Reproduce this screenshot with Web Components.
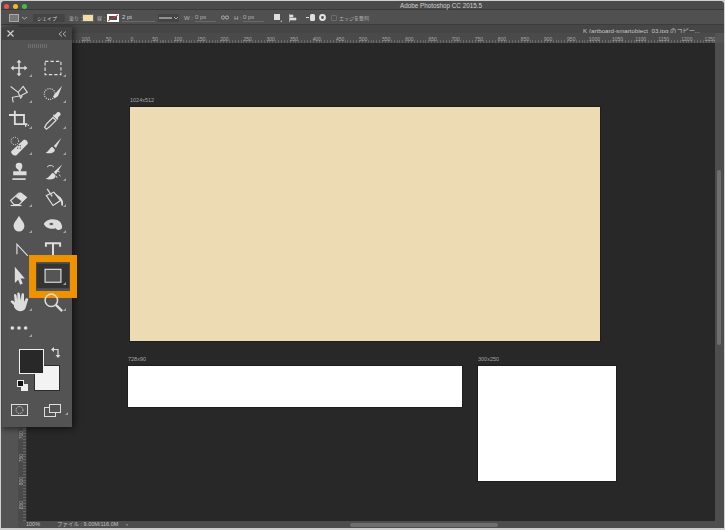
<!DOCTYPE html>
<html lang="ja">
<head>
<meta charset="utf-8">
<title>Photoshop</title>
<style>
  html, body { margin: 0; background: #cfcfcf; }
  body { width: 725px; height: 530px; overflow: hidden; font-family: "Liberation Sans", "Noto Sans CJK JP", sans-serif; }
</style>
</head>
<body>
<ps-window>
  <ps-titlebar slot="top">Adobe Photoshop CC 2015.5</ps-titlebar>
  <ps-options slot="top"></ps-options>
  <ps-tools slot="float"></ps-tools>
  <ps-document>
    <ps-artboard label="1024x512" style="left:103px;top:64px;width:470px;height:234px;background:#eddbb3"></ps-artboard>
    <ps-artboard label="728x90" style="left:101px;top:323px;width:334px;height:41px"></ps-artboard>
    <ps-artboard label="300x250" style="left:451px;top:323px;width:138px;height:115px"></ps-artboard>
  </ps-document>
</ps-window>

<script>
// window frame
customElements.define('ps-window', class extends HTMLElement {
  constructor() {
    super()
    this.attachShadow({ mode: 'open' }).innerHTML = `
      <style>
        :host { display: flex; flex-direction: column; position: relative; width: 723px; height: 527px; margin: 1px 1px 0 1px; background: #535353; border-radius: 4px 4px 0 0; overflow: hidden; }
        .float { position: absolute; left: 1px; top: 26px; }
        .doc { flex: 1; display: flex; min-height: 0; padding-left: 17px; }
      </style>
      <slot name="top"></slot>
      <div class="doc"><slot></slot></div>
      <div class="float"><slot name="float"></slot></div>`
  }
})

customElements.define('ps-titlebar', class extends HTMLElement {
  constructor() {
    super()
    this.attachShadow({ mode: 'open' }).innerHTML = `
      <style>
        :host { display: flex; align-items: center; height: 8px; padding: 0 3px; background: #4b4b4b; border-bottom: 1px solid #3a3a3a; color: #cfcfcf; font-size: 6.300px; position: relative; }
        .lights { display: flex; gap: 4px; margin-top: 2px; }
        .lights i { width: 5px; height: 5px; border-radius: 50%; }
        .name { position: absolute; left: 399px; top: 0; line-height: 10px; white-space: nowrap; }
      </style>
      <div class="lights">
        <i style="background:#f0544c"></i><i style="background:#f5b62f"></i><i style="background:#3bc148"></i>
      </div>
      <div class="name"><slot></slot></div>`
  }
})

// options bar along the top
customElements.define('ps-options', class extends HTMLElement {
  constructor() {
    super()
    this.attachShadow({ mode: 'open' }).innerHTML = `
      <style>
        :host { display: flex; align-items: center; box-sizing: content-box; height: 13px; padding-top: 1px; background: #505050; border-bottom: 1px solid #3c3c3c; color: #b4b4b4; font-size: 5px; white-space: nowrap; }
        span, svg { flex: none; display: block; }
        .field { border-bottom: 1px solid #6a6a6a; height: 8px; line-height: 8px; font-size: 6px; }
        .sel { background: #444; height: 8px; line-height: 8px; border-radius: 1px; color: #d0d0d0; }
      </style>
      <svg width="10" height="8" style="margin-left:8px"><rect x=".5" y=".5" width="9" height="7" fill="#777" stroke="#aaa"/></svg>
      <svg width="5" height="4" style="margin-left:3px"><path d="M0 1l2.500 2 2.500-2" fill="none" stroke="#aaa"/></svg>
      <span style="width:6px"></span>
      <span class="sel" style="width:32px;padding-left:4px;box-sizing:border-box">シェイプ</span>
      <span style="margin-left:4px;width:11px">塗り：</span>
      <span style="margin-left:2px;width:12px;height:8px;background:#f3dcaa;border:1px solid #666;box-sizing:border-box"></span>
      <span style="margin-left:3px;width:7px">線：</span>
      <svg width="12" height="8" style="margin-left:3px"><rect width="12" height="8" fill="#fff"/><rect x="2" y="2" width="8" height="4" fill="#505050"/><path d="M1 7L11 1" stroke="#d8343c"/></svg>
      <span class="field" style="margin-left:3px;width:33px;color:#d0d0d0">2 pt</span>
      <svg width="21" height="8" style="margin-left:3px"><rect width="21" height="8" fill="#444"/><path d="M1 4h13" stroke="#ddd"/><path d="M16 3l2 2 2-2" fill="none" stroke="#aaa"/></svg>
      <span style="margin-left:5px;width:10px;font-size:6px">W :</span>
      <span class="field" style="margin-left:1px;width:21px">0 px</span>
      <svg width="8" height="5" style="margin-left:5px"><circle cx="2" cy="2.500" r="1.600" fill="none" stroke="#aaa"/><circle cx="6" cy="2.500" r="1.600" fill="none" stroke="#aaa"/></svg>
      <span style="margin-left:5px;width:9px;font-size:6px">H :</span>
      <span class="field" style="width:21px">0 px</span>
      <svg width="10" height="10" style="margin-left:9px"><rect x="1" y="1" width="6" height="6" fill="#ddd"/><path d="M9 9h-2l2-2z" fill="#aaa"/></svg>
      <svg width="10" height="10" style="margin-left:5px"><path d="M1.500 1v8M2 2h3v2H2zM2 5h6v2H2z" fill="#ddd" stroke="#ddd" stroke-width=".6"/></svg>
      <svg width="12" height="10" style="margin-left:8px"><rect x="4" y="1" width="5" height="7" rx="1.500" fill="#ddd"/><path d="M0 4.500h3" stroke="#ddd"/></svg>
      <svg width="9" height="9" style="margin-left:0"><circle cx="4.500" cy="4.500" r="2.400" fill="none" stroke="#e6e6e6" stroke-width="2"/></svg>
      <span style="margin-left:4px;width:6px;height:6px;border:1px solid #6c6c6c;border-radius:1px;box-sizing:border-box"></span>
      <span style="margin-left:2px">エッジを整列</span>`
  }
})

const toolIcons = [
  // move
  '<path d="M12 4v16M4 12h16" stroke-width="1.800"/><path d="M12 2l3 3.500H9zM12 22l3-3.500H9zM2 12l3.500-3v6zM22 12l-3.500-3v6z" fill="#ddd" stroke="none"/>',
  // marquee
  '<rect x="2.500" y="4" width="19" height="16" stroke-dasharray="4 2.500" stroke-width="1.400"/>',
  // lasso
  '<path d="M2 3l9 7 6-7 5 7-8 4-10 2 1 6" stroke-width="1.300"/><path d="M11 10l3 7 2-3" stroke-width="1.300"/>',
  // quick selection
  '<circle cx="8" cy="12" r="6.500" stroke-dasharray="1.300 1.400" stroke-width="1.300"/><path d="M23 2l-8 9-3 4 2 2.500 4-3z" fill="#ddd" stroke="none"/>',
  // crop
  '<path d="M0 6h6M7 1v16h15M7 6h11v10" stroke-width="2.200"/><path d="M20 17v3M24 18.500h-1.500" stroke-width="1.600"/>',
  // eyedropper
  '<path d="M4 23l-2-2 2-4 8-8 3.500 3.500-8 8z" stroke-width="1.500"/><path d="M12 7l5 5 1.500-1.500-1-1 3.500-3.500c1-2-1.500-4.500-3.500-3.500l-3.500 3.500-1-1z" fill="#ddd" stroke="none"/>',
  // healing
  '<path d="M3 18l14-13c3-2 7 2 5 5L9 23c-2 2-8-2-6-5z" fill="#ddd" stroke="none"/><path d="M10 14l1 1M13 11l1 1M11 11l1 1M13 14l1 1" stroke="#555" stroke-width="1.300"/><circle cx="7" cy="6" r="4.500" stroke-dasharray="1.300 1.300" stroke-width="1.200"/>',
  // brush
  '<path d="M22 2l-9 10 2.500 2.500z" fill="#ddd" stroke="none"/><path d="M11 13c-3 1-4 6-8 7 5 2 12 0 11-4z" fill="#ddd" stroke="none"/>',
  // stamp
  '<path d="M8 5a4 4 0 0 1 8 0c0 3-2 4-2 6h7v5H5v-5h7c0-2-4-3-4-6z" fill="#ddd" stroke="none"/><path d="M4 20.500h16" stroke-width="2"/>',
  // history brush
  '<path d="M23 3l-10 9 2.500 3z" fill="#ddd" stroke="none"/><path d="M12 13c-3 1-4 6-9 7 5 2 13 1 12-4z" fill="#ddd" stroke="none"/><path d="M5 6c3-3 6-2 8 0M18 11l2 1M19 15l2 2M16 17l1 2" stroke-width="1.200"/>',
  // eraser
  '<path d="M2 15L12 6l8 6-8 8H6z" stroke-width="1.400"/><path d="M8 10.500l6-5.500 8 6-6 5.500z" fill="#ddd" stroke="none"/><path d="M2 21h13" stroke-width="1.400"/>',
  // bucket
  '<path d="M4 9l9-4 8 10-9 6z" stroke-width="1.500"/><path d="M5 1l6 9" stroke-width="1.500"/><path d="M14 6l7 9c1 1 1 4 1 6h2c1-4-1-8-3-10z" fill="#ddd" stroke="none"/>',
  // drop
  '<path d="M12 2c2.500 5 6.500 8 6.500 12.500a6.500 6.500 0 0 1-13 0C5.500 10 9.500 7 12 2z" fill="#ddd" stroke="none"/>',
  // sponge
  '<path d="M1 12c2-5 10-7 15-5 5 1 7 6 7 9-1 4-6 4-8 1-5 2-12 0-14-5z" fill="#ddd" stroke="none"/><ellipse cx="10" cy="12" rx="3" ry="1.800" fill="#555"/>',
  // pen
  '<path d="M9.500 17V5L22.500 19" stroke-width="1.400"/>',
  // type
  '<path d="M3.500 8V4h17v4M12 4v17M8.500 21h7" stroke-width="2.400"/>',
  // path select arrow
  '<path d="M7 1l12 14h-5l2.500 6-3 1.500-2.500-6-4 4z" fill="#ddd" stroke="none"/>',
  // rectangle
  '<rect x="2.500" y="4" width="19" height="15.500" fill="#555" stroke-width="1.400"/>',
  // hand
  '<path d="M6 16l-4-4c0-2 2-2 4-1l1 2-1-9c0-2 2-2 3 0l1 6V2c0-2 2-2 3 0l1 8 1-7c0-2 3-2 3 0l0 9 2-4c1-1 3 0 3 1l-3 10c-1 3-3 4-7 4-3 0-5-2-7-5z" fill="#ddd" stroke="none"/>',
  // zoom
  '<circle cx="10" cy="10" r="7.500" stroke-width="1.800"/><path d="M15.500 15.500L23 23" stroke-width="2.800"/>',
  // more
  '<circle cx="4" cy="12" r="2.200" fill="#ddd" stroke="none"/><circle cx="12" cy="12" r="2.200" fill="#ddd" stroke="none"/><circle cx="20" cy="12" r="2.200" fill="#ddd" stroke="none"/>'
]
const noCorner = [8, 15]

// floating tools panel
customElements.define('ps-tools', class extends HTMLElement {
  constructor() {
    super()
    this.attachShadow({ mode: 'open' }).innerHTML = `
      <style>
        :host { display: flex; flex-direction: column; width: 70px; height: 400px; background: #535353; box-shadow: 3px 0 6px rgba(0,0,0,.4), 0 3px 5px rgba(0,0,0,.25); }
        .head { display: flex; justify-content: space-between; align-items: center; height: 13px; background: #424242; padding: 0 5px; }
        .grip { width: 19px; height: 4px; margin: 4px auto 7px; background: repeating-linear-gradient(90deg, #707070 0 1px, transparent 1px 2px); }
        .grid { display: grid; grid-template-columns: 34px 34px; grid-auto-rows: 26px; }
        .tool { position: relative; display: flex; align-items: center; justify-content: center; }
        .tool.corner::before { content: ""; position: absolute; right: 4px; bottom: 4px; border: 0 solid transparent; border-width: 0 0 3px 3px; border-bottom-color: #a0a0a0; }
        .tool.active { background: #343434; box-shadow: inset 0 0 0 1px #4a4a4a; }
        .tool.active::after { content: ""; position: absolute; left: -7px; right: -7px; top: -8px; bottom: -9px; border: 7px solid #ee9200; }
        svg.i { fill: none; stroke: #ddd; filter: blur(.2px); }
        .colors { position: relative; height: 51px; margin-top: 8px; }
        .fg, .bg { position: absolute; box-sizing: border-box; }
        .fg { left: 17px; top: 0; width: 25px; height: 25px; background: #282828; border: 1px solid #f0f0f0; z-index: 1; }
        .bg { left: 32px; top: 16px; width: 26px; height: 26px; background: #f3f3f3; border: 1px solid #2c2c2c; }
        .swap { position: absolute; left: 49px; top: -2px; }
        .mini { position: absolute; left: 15px; top: 31px; }
        .foot { display: flex; align-items: center; padding: 4px 0 0 9px; gap: 15px; position: relative; }
        .foot i { position: absolute; right: 4px; bottom: 2px; border: 0 solid transparent; border-width: 0 0 3px 3px; border-bottom-color: #a0a0a0; }
      </style>
      <div class="head">
        <svg width="7" height="7"><path d="M.5.500l6 6M6.500.500l-6 6" stroke="#cfcfcf" stroke-width="1.200"/></svg>
        <svg width="9" height="6"><path d="M4 .5L1 3l3 2.500M8 .5L5 3l3 2.500" fill="none" stroke="#a8a8a8"/></svg>
      </div>
      <div class="grip"></div>
      <div class="grid"></div>
      <div class="colors">
        <div class="fg"></div>
        <div class="bg"></div>
        <svg class="swap" width="10" height="11"><path d="M1 2.500h6V9" fill="none" stroke="#ddd" stroke-width="1.200"/><path d="M0 2.500L3 0v5zM7 11L4.500 8h5z" fill="#ddd"/></svg>
        <svg class="mini" width="11" height="11"><rect x="4" y="4" width="7" height="7" fill="#eee"/><rect x=".5" y=".5" width="6" height="6" fill="#111" stroke="#eee"/></svg>
      </div>
      <div class="foot">
        <svg width="18" height="13"><rect x=".5" y=".5" width="16" height="11" fill="none" stroke="#ddd"/><circle cx="8.500" cy="6" r="3.500" fill="none" stroke="#ddd" stroke-dasharray="1 1"/></svg>
        <svg width="17" height="13"><rect x=".5" y="3.500" width="11" height="9" fill="none" stroke="#ddd"/><rect x="5.500" y=".5" width="11" height="8" fill="#535353" stroke="#ddd"/></svg>
        <i></i>
      </div>`
    const grid = this.shadowRoot.querySelector('.grid')
    toolIcons.forEach((icon, index) => {
      const cell = document.createElement('div')
      cell.className = 'tool'
      if (!noCorner.includes(index)) cell.classList.add('corner')
      if (index === 17) cell.classList.add('active')
      cell.innerHTML = `<svg class="i" width="20" height="20" viewBox="0 0 24 24">${icon}</svg>`
      grid.appendChild(cell)
    })
  }
})

// tab strip, rulers, canvas, scrollbars, status line
customElements.define('ps-document', class extends HTMLElement {
  constructor() {
    super()
    this.attachShadow({ mode: 'open' }).innerHTML = `
      <style>
        :host { flex: 1; display: flex; flex-direction: column; min-width: 0; }
        .tab { height: 8px; background: #464646; display: flex; justify-content: flex-end; padding-right: 24px; font-size: 6.200px; line-height: 11px; color: #c8c8c8; white-space: nowrap; }
        .hruler { height: 10px; position: relative; background: #4a4a4a repeating-linear-gradient(90deg, #686868 0 1px, transparent 1px 2.890px) 0 100%/100% 3px no-repeat; margin-right: 9px; overflow: hidden; }
        .hruler .n { position: absolute; top: 3px; width: 24px; text-align: center; font-size: 5px; line-height: 6px; color: #a8a8a8; }
        .row { flex: 1; display: flex; min-height: 0; }
        .vruler { width: 8px; flex: none; position: relative; background: #4a4a4a repeating-linear-gradient(0deg, #686868 0 1px, transparent 1px 2.890px) 100% 0/3px 100% no-repeat; border-right: 1px solid #333; }
        .vruler .n { position: absolute; left: 0; writing-mode: vertical-rl; transform: rotate(180deg); font-size: 5px; line-height: 6px; color: #a8a8a8; }
        .canvas { flex: 1; position: relative; background: #282828; overflow: hidden; }
        .vbar { width: 9px; flex: none; background: #4d4d4d; position: relative; }
        .vbar i { position: absolute; left: 2px; top: 127px; width: 4px; height: 175px; background: #6e6e6e; border-radius: 2px; }
        .status { height: 7px; background: #4d4d4d; position: relative; font-size: 5.500px; line-height: 7px; color: #c0c0c0; white-space: nowrap; }
        .status span { position: absolute; top: 0; }
        .status i { position: absolute; left: 332px; top: 2px; width: 148px; height: 4px; background: #6e6e6e; border-radius: 2px; }
      </style>
      <div class="tab">K (artboard-smartobject_03.jpg のコピー...</div>
      <div class="hruler"></div>
      <div class="row">
        <div class="vruler"></div>
        <div class="canvas"><slot></slot></div>
        <div class="vbar"><i></i></div>
      </div>
      <div class="status">
        <span style="left:8px">100%</span>
        <span style="left:39px">ファイル : 9.00M/116.0M</span>
        <span style="left:108px">›</span>
        <i></i>
      </div>`
    const ruler = this.shadowRoot.querySelector('.hruler')
    for (let i = 0; i <= 27; i++) {
      const n = document.createElement('div')
      n.className = 'n'
      n.textContent = Math.abs(i - 2) * 50
      n.style.left = (132 + (i - 2) * 23.12 - 18 - 12) + 'px'
      ruler.appendChild(n)
    }
    const side = this.shadowRoot.querySelector('.vruler')
    ;[700, 750, 800, 850].forEach((value, i) => {
      const n = document.createElement('div')
      n.className = 'n'
      n.textContent = value
      n.style.top = (388 + i * 23.2) + 'px'
      side.appendChild(n)
    })
  }
})

// an artboard lying on the canvas
customElements.define('ps-artboard', class extends HTMLElement {
  constructor() {
    super()
    this.attachShadow({ mode: 'open' }).innerHTML = `
      <style>
        :host { display: block; position: absolute; background: #fff; box-shadow: 0 0 0 1px #1e1e1e; }
        div { position: absolute; left: 0; top: -10px; font-size: 5.500px; line-height: 7px; color: #a4a4a4; white-space: nowrap; }
      </style>
      <div></div>`
  }
  connectedCallback() {
    this.shadowRoot.querySelector('div').textContent = this.getAttribute('label')
  }
})
</script>
</body>
</html>
